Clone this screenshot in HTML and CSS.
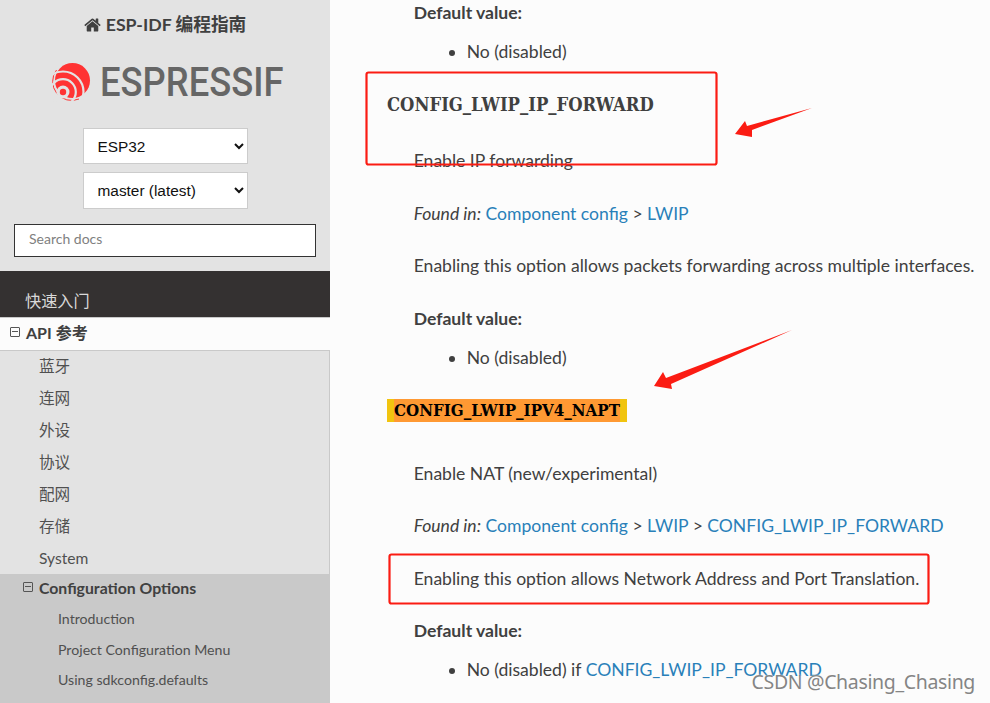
FILE: index.html
```html
<!DOCTYPE html>
<html lang="zh">
<head>
<meta charset="utf-8">
<title>CONFIG_LWIP_IP_FORWARD</title>
<link rel="stylesheet" href="styles.css">
</head>
<body>
<div class="page">
  <aside class="sidebar">
    <div class="search-area">
      <a class="title"><svg class="home" viewBox="0 0 1664 1792"><path d="M1408 992v480q0 26-19 45t-45 19h-384v-384h-256v384h-384q-26 0-45-19t-19-45v-480q0-1 .5-3t.5-3l575-474 575 474q1 2 1 6zm223-69l-62 74q-8 9-21 11h-3q-13 0-21-7l-692-577-692 577q-12 8-24 7-13-2-21-11l-62-74q-8-10-7-23.5t11-21.5l719-599q32-26 76-26t76 26l244 204v-195q0-14 9-23t23-9h192q14 0 23 9t9 23v408l219 182q10 8 11 21.5t-7 23.5z"/></svg> ESP-IDF 编程指南</a>
      <div class="logo">
        <svg class="logo-mark" viewBox="0 0 40 40">
          <path d="M4.5 8A19 19 0 0 0 27 37" fill="none" stroke="#f33" stroke-width="1"/>
          <circle cx="20.5" cy="18.5" r="17.5" fill="#f33"/>
          <circle cx="11" cy="30" r="20.5" fill="none" stroke="#e3e3e3" stroke-width="2.2"/>
          <circle cx="11" cy="30" r="12.8" fill="none" stroke="#e3e3e3" stroke-width="2.2"/>
          <circle cx="11" cy="30" r="6.5" fill="#e3e3e3"/>
          <circle cx="11" cy="30" r="3.2" fill="#f33"/>
        </svg>
        <span class="logo-text">ESPRESSIF</span>
      </div>
      <select class="picker"><option>ESP32</option></select>
      <select class="picker tall"><option>master (latest)</option></select>
      <input class="search" type="text" placeholder="Search docs">
    </div>
    <nav class="menu">
      <div class="dark"><span>快速入门</span></div>
      <div class="current"><span class="minus"></span>API 参考</div>
      <ul class="level2">
        <li>蓝牙</li><li>连网</li><li>外设</li><li>协议</li><li>配网</li><li>存储</li><li>System</li>
      </ul>
      <div class="level3">
        <div class="level3-head"><span class="minus"></span>Configuration Options</div>
        <ul>
          <li>Introduction</li><li>Project Configuration Menu</li><li>Using sdkconfig.defaults</li>
        </ul>
      </div>
    </nav>
  </aside>
  <main class="content">
    <div class="opt">
      <p class="strong">Default value:</p>
      <ul><li>No (disabled)</li></ul>
    </div>
    <h4 class="big">CONFIG_LWIP_IP_FORWARD</h4>
    <div class="opt">
      <p>Enable IP forwarding</p>
      <p><em>Found in:</em> <a>Component config</a> &gt; <a>LWIP</a></p>
      <p>Enabling this option allows packets forwarding across multiple interfaces.</p>
      <p class="strong">Default value:</p>
      <ul><li>No (disabled)</li></ul>
    </div>
    <h4 class="hit"><mark><span>CONFIG_LWIP_IPV4_NAPT</span></mark></h4>
    <div class="opt">
      <p>Enable NAT (new/experimental)</p>
      <p><em>Found in:</em> <a>Component config</a> &gt; <a>LWIP</a> &gt; <a>CONFIG_LWIP_IP_FORWARD</a></p>
      <p>Enabling this option allows Network Address and Port Translation.</p>
      <p class="strong">Default value:</p>
      <ul><li>No (disabled) if <a>CONFIG_LWIP_IP_FORWARD</a></li></ul>
    </div>
  </main>
</div>
<svg class="marks" viewBox="0 0 990 703">
  <rect x="366.5" y="72.5" width="350" height="92" rx="2" fill="none" stroke="#fb1c13" stroke-width="2.2"/>
  <rect x="389.5" y="554.5" width="539" height="49" rx="2" fill="none" stroke="#fb1c13" stroke-width="2.2"/>
  <polygon points="735,134 745,121 747,126 812,108 752,130 752,137" fill="#fb1c13"/>
  <polygon points="654,386 663,372 666,378 792,330 671,384 672,389" fill="#fb1c13"/>
</svg>
<div class="watermark">CSDN @Chasing_Chasing</div>
</body>
</html>
```

FILE: styles.css
```css
* { box-sizing: border-box; }
html, body { margin: 0; height: 703px; overflow: hidden; }
body { font-family: Lato, "Noto Sans CJK SC", sans-serif; color: #404040; background: #fcfcfc; position: relative; }
.page { display: flex; height: 703px; }
.sidebar { width: 330px; flex: none; background: #e3e3e3; display: flex; flex-direction: column; }
.search-area { display: flex; flex-direction: column; align-items: center; height: 271px; padding-top: 14px; }
.title { display: flex; align-items: center; gap: 5px; font-size: 17.7px; font-weight: 700; line-height: 22px; color: #404040; }
.home { width: 17px; height: 18px; fill: #404040; }
.logo { display: flex; align-items: center; gap: 8px; margin-top: 26px; height: 40px; padding-left: 3px; }
.logo-mark { width: 40px; height: 40px; flex: none; }
.logo-text { display: block; width: 181px; font-family: Roboto, sans-serif; font-size: 41px; font-weight: 500; line-height: 40px; color: #666; white-space: nowrap; transform: scaleX(0.887); transform-origin: left center; }
.picker { width: 165px; height: 36px; margin-top: 26px; padding-left: 10px; border: 1px solid #ccc; background: #fff; font-family: "Liberation Sans", sans-serif; font-size: 15.4px; color: #111; border-radius: 0; }
.tall { height: 37px; margin-top: 8px; }
.search { width: 302px; height: 33px; margin-top: 15px; padding: 0 14px 4px; border: 1px solid #333; background: #fff; font-family: Lato, sans-serif; font-size: 14px; }
.search::placeholder { color: #808080; opacity: 1; }
.menu { flex: 1; display: flex; flex-direction: column; }
.dark { height: 47px; padding: 20px 0 0 25px; background: #343131; border-bottom: 1px solid #c9c9c9; color: #d9d9d9; font-size: 16.2px; line-height: 20px; }
.current { display: flex; align-items: center; height: 33px; padding: 0 0 4px 10px; background: #fcfcfc; border-bottom: 1px solid #c9c9c9; color: #404040; font-size: 16px; font-weight: 700; }
.minus { width: 10px; height: 10px; margin-right: 6px; border: 1px solid #555; border-radius: 1px; position: relative; flex: none; }
.minus::after { content: ""; position: absolute; left: 1px; right: 1px; top: 3px; height: 1px; background: #555; }
.level2, .level3 ul { list-style: none; margin: 0; padding: 0; }
.level2 { background: #e3e3e3; border-right: 1px solid #c9c9c9; height: 223px; }
.level2 li { height: 32px; padding-left: 39px; line-height: 30px; font-size: 15.6px; color: #505050; }
.level3 { flex: 1; background: #c9c9c9; }
.level3-head { display: flex; align-items: center; height: 30px; padding: 0 0 4px 23px; font-size: 15.8px; font-weight: 700; color: #404040; }
.level3 li { height: 30.5px; padding-left: 58px; line-height: 30.5px; font-size: 14.15px; color: #505050; }
.content { flex: 1; padding-left: 57px; font-size: 17.57px; line-height: 26.2px; min-width: 0; }
.opt { padding-left: 26.7px; }
.opt p { margin: 0 0 26.2px; white-space: nowrap; }
.opt p.strong { font-weight: 700; margin-bottom: 13px; }
.opt ul { margin: 0; padding-left: 53px; white-space: nowrap; }
.content a { color: #2980b9; }
h4 { margin: 0; font-family: "DejaVu Serif Condensed", "DejaVu Serif", serif; font-weight: 700; line-height: 24px; white-space: nowrap; color: #404040; }
h4.big { font-size: 18.3px; padding-top: 28px; height: 83px; }
h4.hit { font-size: 16.8px; height: 63px; margin-top: 27px; color: #000; }
mark { display: inline-block; height: 23px; line-height: 23px; padding: 0 7px; color: #000; background: #f1c40f; }
mark span { display: block; background: #f93; }
.marks { position: absolute; left: 0; top: 0; width: 990px; height: 703px; pointer-events: none; }
.watermark { position: absolute; right: 15px; top: 669px; font-family: "Noto Sans", sans-serif; font-size: 19.5px; line-height: 26px; letter-spacing: -0.35px; color: #858585; text-shadow: 0 0 2px #fff; }
```
